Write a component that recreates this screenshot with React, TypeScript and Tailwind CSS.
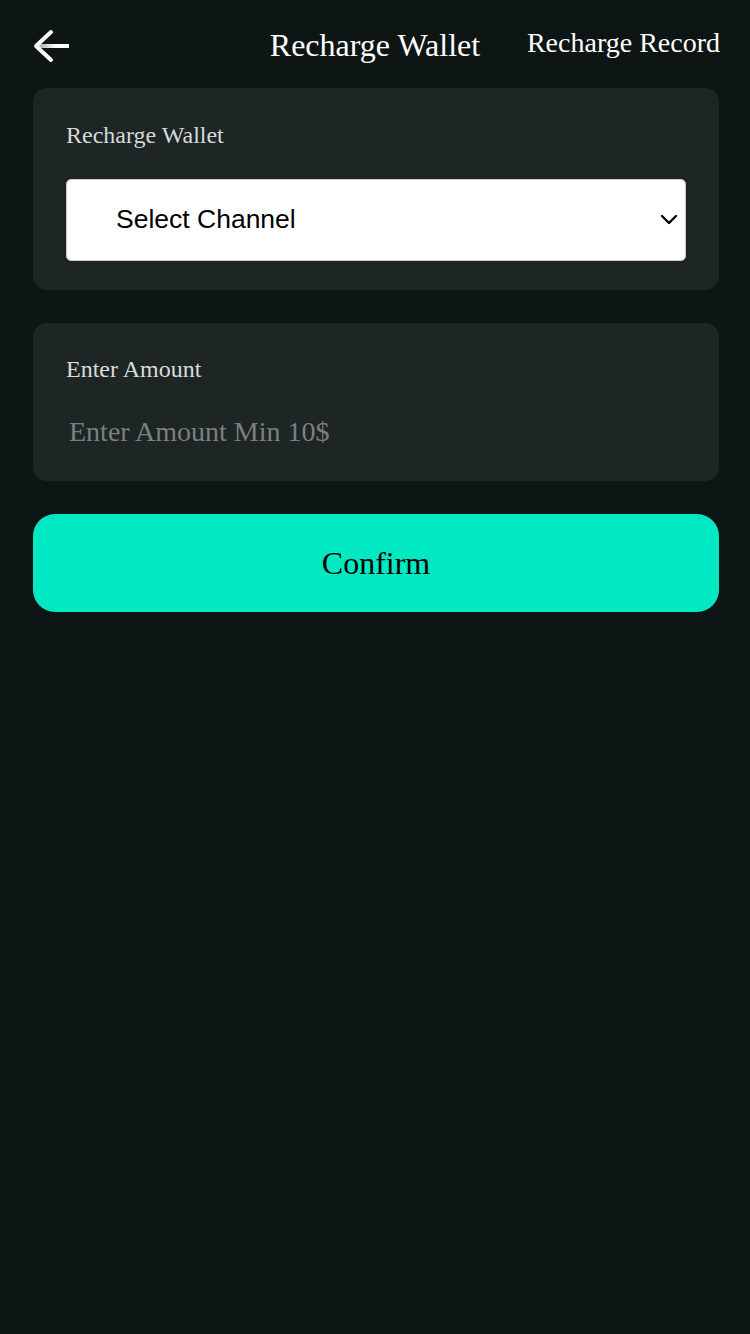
import React from 'react';

const serif = { fontFamily: '"Liberation Serif", "Times New Roman", serif' };

const BackArrow = () => (
    <svg width="40" height="36" viewBox="0 0 40 36" fill="none">
        <defs>
            <linearGradient id="shaft" gradientUnits="userSpaceOnUse" x1="6" y1="18" x2="37" y2="18">
                <stop offset="0" stopColor="#a8a8a8" />
                <stop offset="0.55" stopColor="#ffffff" />
            </linearGradient>
        </defs>
        <path d="M6 18 H37" stroke="url(#shaft)" strokeWidth="4" />
        <path d="M19 4 L4 18 L19 32" stroke="white" strokeWidth="4" strokeLinecap="round" strokeLinejoin="round" />
    </svg>
);

const Chevron = () => (
    <svg width="18" height="12" viewBox="0 0 18 12" fill="none">
        <path d="M2 2 L9 9 L16 2" stroke="black" strokeWidth="2.4" strokeLinecap="round" strokeLinejoin="round" />
    </svg>
);

export default function App() {
    return (
        <div className="min-h-screen bg-[#0e1515] pl-[33px] pr-[31px] pb-10" style={serif}>
            {/* Header */}
            <header className="grid grid-cols-[1fr_auto_1fr] items-center h-[88px] -mr-[1px]">
                <button className="flex items-center justify-start w-fit mt-[4px] -ml-[1px]">
                    <BackArrow />
                </button>
                <h1 className="text-[32px] leading-[36px] text-white pt-[1px] -ml-[3px]">Recharge Wallet</h1>
                <button className="justify-self-end text-[28px] leading-[32px] text-white -mt-[3px]">Recharge Record</button>
            </header>

            {/* Channel */}
            <section className="rounded-[14px] bg-[#1d2625] px-[33px] pt-[33px] pb-[29px]">
                <p className="text-[24px] leading-[28px] text-[#d6dad9]">Recharge Wallet</p>
                <div className="mt-[30px] flex h-[82px] items-center justify-between rounded-[5px] border border-[#c9c9c9] bg-white pl-[49px] pr-[7px]">
                    <span className="text-[26.5px] text-black" style={{ fontFamily: '"Liberation Sans", Arial, sans-serif' }}>Select Channel</span>
                    <Chevron />
                </div>
            </section>

            {/* Amount */}
            <section className="mt-[33px] h-[158px] rounded-[14px] bg-[#1d2625] px-[33px] pt-[32px]">
                <p className="text-[24px] leading-[28px] text-[#d9dcdb]">Enter Amount</p>
                <input
                    type="text"
                    placeholder="Enter Amount Min 10$"
                    className="mt-[33px] block w-full bg-transparent pl-[3px] text-[28px] leading-[32px] text-white outline-none placeholder:text-[#7b807f]"
                    style={serif}
                />
            </section>

            <button className="mt-[33px] flex h-[98px] w-full items-center justify-center rounded-[22px] bg-[#00e9c3] text-[32px] text-black" style={serif}>
                Confirm
            </button>
        </div>
    );
}
